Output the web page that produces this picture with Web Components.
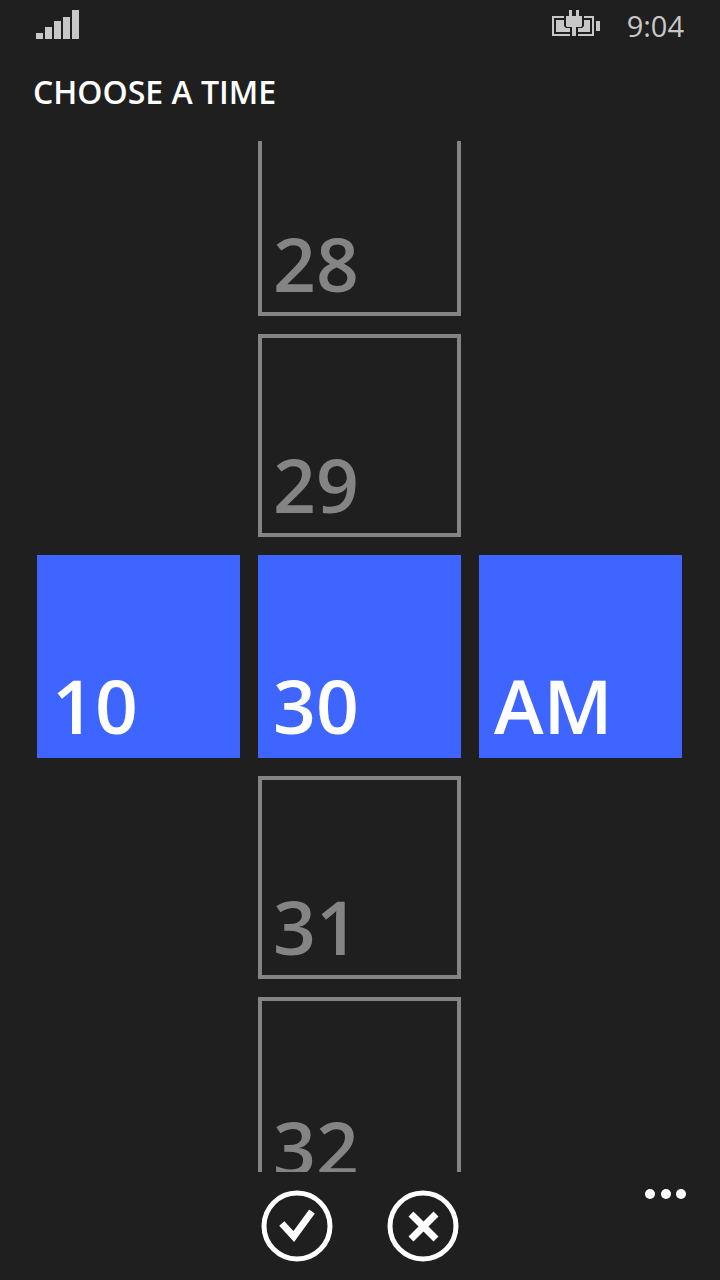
<!DOCTYPE html>
<html lang="en">
<head>
<meta charset="utf-8">
<meta name="viewport" content="width=device-width, initial-scale=1">
<title>Choose a time</title>
<style>
  body {
    margin: 0;
    background: #1f1f1f;
    color: #fff;
    font-family: "Open Sans", "Noto Sans", sans-serif;
    --accent: #3e65ff;
    --muted: #848484;
    --status: #c8c8c8;
  }
</style>
</head>
<body>
<time-page>
  <status-bar slot="status">9:04</status-bar>
  <span slot="title">CHOOSE A TIME</span>
  <time-column label="Hour">
    <time-tile selected>10</time-tile>
  </time-column>
  <time-column label="Minute">
    <time-tile>28</time-tile>
    <time-tile>29</time-tile>
    <time-tile selected>30</time-tile>
    <time-tile>31</time-tile>
    <time-tile>32</time-tile>
  </time-column>
  <time-column label="Period">
    <time-tile selected>AM</time-tile>
  </time-column>
  <app-bar slot="appbar"></app-bar>
</time-page>

<script>
class BaseElement extends HTMLElement {
  constructor() {
    super();
    const template = document.createElement("template");
    template.innerHTML = this.constructor.markup;
    this.attachShadow({ mode: "open" }).append(template.content.cloneNode(true));
  }
}

customElements.define("time-page", class extends BaseElement {
  static markup = `
    <style>
      :host { display: flex; flex-direction: column; height: 100vh; }
      h1 {
        margin: 0; padding: 20px 33px 0; height: 69px;
        font-size: 32px; line-height: 40px; font-weight: 600;
      }
      main {
        flex: 1; min-height: 0; overflow: hidden;
        display: grid; grid-template-columns: repeat(3, 1fr);
        gap: 18px; padding: 0 38px 0 37px;
      }
    </style>
    <slot name="status"></slot>
    <h1><slot name="title"></slot></h1>
    <main><slot></slot></main>
    <slot name="appbar"></slot>`;
});

customElements.define("status-bar", class extends BaseElement {
  static markup = `
    <style>
      :host {
        display: flex; align-items: center; height: 52px;
        padding: 0 36px; color: var(--status);
        font-size: 29px; line-height: 52px;
      }
      svg { display: block; fill: currentColor; }
      .battery { margin-left: auto; margin-right: 27px; }
    </style>
    <svg width="43" height="32" viewBox="0 0 43 32" role="img" aria-label="Signal strength" shape-rendering="crispEdges">
      <path d="M0 23h7v6H0zM9 17h7v12H9zM18 11h7v18h-7zM27 7h7v22h-7zM36 0h7v29h-7z"/>
    </svg>
    <svg class="battery" width="48" height="32" viewBox="0 0 48 32" role="img" aria-label="Battery charging">
      <path d="M0 6h12v2H2v16h16v2H0zM32 6h10v20H26v-2h14V8h-8zM44 11h4v10h-4z"/>
      <path d="M4 10h8v6l2 2h4v4H4zM38 10h-6v6l-2 2h-4v4h12z"/>
      <path d="M17 0h3v6h4V0h3v6h3v10l-1 1h-5v9h-4v-9h-5l-1-1V6h3z"/>
    </svg>
    <slot></slot>`;
});

customElements.define("time-column", class extends BaseElement {
  static markup = `
    <style>
      :host { display: flex; flex-direction: column; justify-content: center; gap: 18px; min-width: 0; min-height: 0; }
    </style>
    <slot></slot>`;
  connectedCallback() {
    this.setAttribute("role", "group");
    this.setAttribute("aria-label", this.getAttribute("label"));
  }
});

customElements.define("time-tile", class extends BaseElement {
  static markup = `
    <style>
      :host { display: block; flex: none; }
      button {
        display: flex; align-items: flex-end; box-sizing: border-box;
        width: 100%; aspect-ratio: 1; margin: 0; padding: 0 11px 9px;
        border: 4px solid var(--muted); border-radius: 0; background: none;
        color: var(--muted); font: inherit; font-size: 75px; line-height: 80px; font-weight: 600;
      }
      :host([selected]) button { background: var(--accent); border-color: var(--accent); color: #fff; }
    </style>
    <button type="button"><slot></slot></button>`;
});

customElements.define("app-bar", class extends BaseElement {
  static markup = `
    <style>
      :host {
        display: grid; grid-template-columns: 1fr auto 1fr; align-items: start;
        height: 91px; padding: 17px 33px 0;
      }
      div { grid-column: 2; display: flex; gap: 54px; }
      button { margin: 0; padding: 0; border: 0; background: none; color: #fff; }
      .more { justify-self: end; }
      svg { display: block; fill: none; stroke: currentColor; }
    </style>
    <div>
      <button type="button" aria-label="Done">
        <svg width="72" height="73" viewBox="0 -1 72 73">
          <circle cx="36" cy="36" r="33" stroke-width="5"/>
          <path d="M20.800 33.500l12 13L51 21.500" stroke-width="7"/>
        </svg>
      </button>
      <button type="button" aria-label="Cancel">
        <svg width="72" height="73" viewBox="0 -1 72 73">
          <circle cx="36" cy="36" r="33" stroke-width="5"/>
          <path d="M24 24l25 25M49 24l-25 25" stroke-width="7"/>
        </svg>
      </button>
    </div>
    <button class="more" type="button" aria-label="More">
      <svg width="42" height="10" viewBox="0 0 42 10">
        <g fill="currentColor" stroke="none"><circle cx="5" cy="5" r="5"/><circle cx="21" cy="5" r="5"/><circle cx="36" cy="5" r="5"/></g>
      </svg>
    </button>`;
});
</script>
</body>
</html>
